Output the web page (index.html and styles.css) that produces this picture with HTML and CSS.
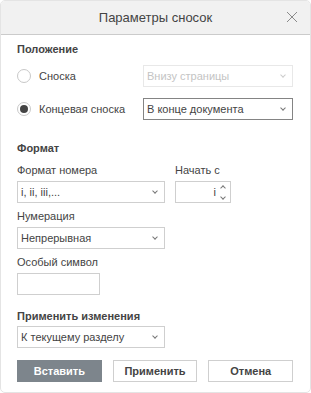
FILE: index.html
```html
<!DOCTYPE html>
<html lang="ru">

<head>
    <meta charset="UTF-8">
    <meta name="viewport" content="width=device-width, initial-scale=1.0">
    <title>Параметры сносок</title>
    <link rel="stylesheet" href="styles.css">
</head>

<body>
    <div class="dialog">
        <header class="dialog-header">
            <span class="dialog-title">Параметры сносок</span>
            <span class="close-button">
                <svg width="12" height="12" viewBox="0 0 12 12">
                    <path d="M1 1 L11 11 M11 1 L1 11" stroke="#8a8a8a" stroke-width="1" fill="none"/>
                </svg>
            </span>
        </header>

        <div class="dialog-body">
            <div class="section-title">Положение</div>

            <div class="radio-row first">
                <label class="radio">
                    <span class="radio-circle"></span>
                    <span>Сноска</span>
                </label>
                <div class="select disabled">
                    <span>Внизу страницы</span>
                    <span class="caret"></span>
                </div>
            </div>

            <div class="radio-row">
                <label class="radio">
                    <span class="radio-circle checked"></span>
                    <span>Концевая сноска</span>
                </label>
                <div class="select focused">
                    <span>В конце документа</span>
                    <span class="caret"></span>
                </div>
            </div>

            <div class="section-title format-title">Формат</div>

            <div class="field-row">
                <div class="field">
                    <div class="field-label">Формат номера</div>
                    <div class="select wide">
                        <span>i, ii, iii,...</span>
                        <span class="caret"></span>
                    </div>
                </div>
                <div class="field">
                    <div class="field-label">Начать с</div>
                    <div class="spinner">
                        <span class="spinner-value">i</span>
                        <span class="spinner-arrows">
                            <span class="arrow up"></span>
                            <span class="arrow down"></span>
                        </span>
                    </div>
                </div>
            </div>

            <div class="field">
                <div class="field-label">Нумерация</div>
                <div class="select wide">
                    <span>Непрерывная</span>
                    <span class="caret"></span>
                </div>
            </div>

            <div class="field">
                <div class="field-label">Особый символ</div>
                <div class="text-input"></div>
            </div>

            <div class="section-title apply-title">Применить изменения</div>
            <div class="select wide">
                <span>К текущему разделу</span>
                <span class="caret"></span>
            </div>

            <div class="buttons">
                <button class="btn primary">Вставить</button>
                <button class="btn">Применить</button>
                <button class="btn">Отмена</button>
            </div>
        </div>
    </div>
</body>

</html>
```

FILE: styles.css
```css
* {
    margin: 0;
    padding: 0;
    box-sizing: border-box;
}

body {
    background: #fff;
    color: #444;
    font-family: "Liberation Sans", Arial, sans-serif;
    font-size: 11px;
}

.dialog {
    width: 311px;
    height: 393px;
    background: #fff;
    border: 1px solid #e4e4e4;
    border-radius: 5px;
    overflow: hidden;
}

/* Header */
.dialog-header {
    position: relative;
    height: 34px;
    background: #f1f1f1;
    border-bottom: 1px solid #cbcbcb;
    display: flex;
    justify-content: center;
    align-items: center;
}

.dialog-title {
    font-size: 13px;
    color: #444;
}

.close-button {
    position: absolute;
    right: 12px;
    top: 10px;
    width: 12px;
    height: 12px;
    display: flex;
}

/* Body */
.dialog-body {
    padding: 0 17px 0 16px;
    display: flex;
    flex-direction: column;
}

.section-title {
    font-weight: bold;
    margin-top: 7px;
    line-height: 14px;
}

.format-title {
    margin-top: 21px;
}

.apply-title {
    margin-top: 14px;
    margin-bottom: 3px;
}

.radio-row {
    display: flex;
    align-items: center;
    justify-content: space-between;
    margin-top: 11px;
}

.radio-row.first {
    margin-top: 9px;
}

.radio {
    display: flex;
    align-items: center;
    gap: 8px;
}

.radio-circle {
    width: 14px;
    height: 14px;
    border: 1px solid #c8c8c8;
    border-radius: 50%;
    display: flex;
    align-items: center;
    justify-content: center;
}

.radio-circle.checked::after {
    content: '';
    width: 8px;
    height: 8px;
    border-radius: 50%;
    background: #444;
}

/* Combo boxes */
.select {
    width: 150px;
    height: 22px;
    border: 1px solid #cfcfcf;
    padding: 0 4px 0 3px;
    display: flex;
    justify-content: space-between;
    align-items: center;
    background: #fff;
}

.select.wide {
    width: 148px;
}

.select.disabled {
    border-color: #e8e8e8;
    color: #c4c4c4;
}

.select.focused {
    border-color: #848484;
}

.caret {
    width: 4px;
    height: 4px;
    border-right: 1px solid #777;
    border-bottom: 1px solid #777;
    transform: rotate(45deg);
    margin: 0 3px 3px 0;
}

.select.disabled .caret {
    border-color: #ccc;
}

/* Fields */
.field-row {
    display: flex;
    gap: 10px;
    padding-top: 2px;
}

.field {
    display: flex;
    flex-direction: column;
    margin-top: 7px;
}

.field-label {
    line-height: 13px;
    margin-bottom: 4px;
}

.spinner {
    width: 56px;
    height: 22px;
    border: 1px solid #cfcfcf;
    display: flex;
    justify-content: flex-end;
    align-items: center;
    padding-right: 4px;
    gap: 5px;
    color: #444;
}

.spinner-arrows {
    display: flex;
    flex-direction: column;
    gap: 5px;
    padding-right: 1px;
}

.arrow {
    width: 4px;
    height: 4px;
    border-right: 1px solid #777;
    border-bottom: 1px solid #777;
}

.arrow.up {
    transform: rotate(-135deg);
}

.arrow.down {
    transform: rotate(45deg);
}

.text-input {
    width: 83px;
    height: 22px;
    border: 1px solid #cfcfcf;
}

/* Footer buttons */
.buttons {
    display: flex;
    gap: 11px;
    margin-top: 12px;
}

.btn {
    width: 86px;
    height: 22px;
    border: 1px solid #cfcfcf;
    background: #fff;
    color: #444;
    font-family: "Liberation Sans", Arial, sans-serif;
    font-size: 11px;
    font-weight: bold;
}

.btn.primary {
    background: #7d858c;
    border-color: #7d858c;
    color: #fff;
}
```
